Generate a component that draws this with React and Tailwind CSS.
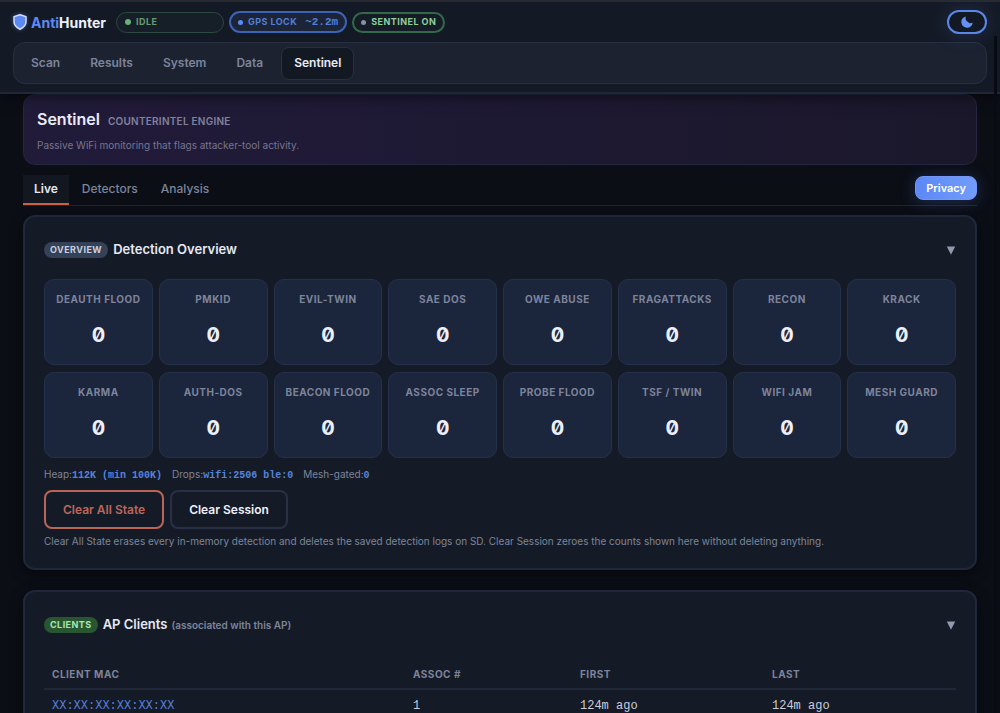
const tabs = ['Scan', 'Results', 'System', 'Data', 'Sentinel']
const subTabs = ['Live', 'Detectors', 'Analysis']

const detectors = [
  'Deauth Flood', 'PMKID', 'Evil-Twin', 'SAE DoS', 'OWE Abuse', 'FragAttacks', 'Recon', 'KRACK',
  'Karma', 'Auth-DoS', 'Beacon Flood', 'Assoc Sleep', 'Probe Flood', 'TSF / Twin', 'WiFi Jam', 'Mesh Guard'
]

const clients = [
  { mac: 'XX:XX:XX:XX:XX:XX', assoc: 1, first: '124m ago', last: '124m ago' }
]

function Card({ badge, badgeClass, title, note, children }) {
  return (
    <section className="rounded-xl border-2 border-[#20273a] bg-[#151b26] px-[19px] pt-[23px] pb-[19px] shadow-[0_4px_14px_rgba(0,0,0,0.45)]">
      <div className="flex items-center justify-between h-5">
        <h3 className="flex items-center gap-[5px] text-[13px] font-semibold text-[#e6e9f5]">
          <span className={`rounded-full px-[6px] text-[9px] leading-4 font-bold tracking-wider uppercase ${badgeClass}`}>
            {badge}
          </span>
          <span>
            {title}
            {note && <span className="ml-1 text-[10px] text-[#7d849b]">{note}</span>}
          </span>
        </h3>
        <button type="button" aria-label={`Collapse ${title}`} className="text-[#9298ad]">
          <svg className="w-[10px] h-[9px]" viewBox="0 0 10 9" fill="currentColor">
            <path d="M.8.4h8.4L5 8.8z" />
          </svg>
        </button>
      </div>
      {children}
    </section>
  )
}

function Metric({ label, value }) {
  return (
    <span>
      {label}:<span className="font-['Liberation_Mono',monospace] font-bold text-[#5583dc]">{value}</span>
    </span>
  )
}

export default function App() {
  return (
    <div className="relative h-screen flex flex-col overflow-hidden bg-[#0b0e15] font-['Inter',sans-serif] text-[#7d849b]">
      {/* Header */}
      <header className="relative z-10 border-t-2 border-b-2 border-t-[#272b31] border-b-[#20273a] bg-[#141a25] px-[13px] pt-2 pb-2 shadow-[0_3px_12px_rgba(0,0,0,0.5)]">
        <div className="flex items-center justify-between h-6">
          <div className="flex items-center gap-[5px]">
            <a href="#home" className="mr-[5px] flex items-center gap-1 text-[14px] font-bold text-[#f0f2fb]">
              <svg className="w-[14px] h-4 drop-shadow-[0_0_2px_rgba(91,138,245,0.5)]" viewBox="0 0 14 16">
                <path d="M7 .8 13 2.6v5.2c0 3.6-2.5 5.8-6 7.4-3.5-1.6-6-3.8-6-7.4V2.6z" fill="#5b8af5" stroke="#d5ddf5" strokeWidth="1.5" strokeLinejoin="round" />
              </svg>
              <span><span className="text-[#5b8af5]">Anti</span>Hunter</span>
            </a>
            <span className="flex items-center gap-[5px] w-[108px] h-[21px] rounded-full border border-[#2b4a40] bg-[#161e27] px-2 text-[9px] font-bold tracking-wider text-[#689b73]">
              <i className="w-[6px] h-[6px] rounded-full bg-[#68b078]" />
              IDLE
            </span>
            <span className="flex items-center gap-[5px] h-[22px] rounded-full border-2 border-[#3c63b5] bg-[#1c2438] px-[7px] text-[9px] font-bold tracking-wider text-[#527fd6]">
              <i className="w-[5px] h-[5px] rounded-full bg-[#5b8af5]" />
              GPS LOCK
              <span className="ml-[3px] font-['Liberation_Mono',monospace] text-[11px] font-bold tracking-normal">~2.2m</span>
            </span>
            <span className="flex items-center gap-[5px] h-[21px] rounded-full border-2 border-[#34684a] bg-[#141c25] px-[7px] text-[9px] font-bold tracking-wider text-[#90ce9d]">
              <i className="w-[5px] h-[5px] rounded-full bg-[#8a8fa5]" />
              SENTINEL ON
            </span>
          </div>
          <button type="button" aria-label="Toggle dark mode" className="flex items-center justify-center w-10 h-6 rounded-full border-2 border-[#5b88e8] bg-[#121824] shadow-[0_0_20px_rgba(80,120,230,0.22)]">
            <svg className="w-3 h-3" viewBox="0 0 12 12">
              <path d="M5 .4A5.7 5.7 0 1 0 11.7 6.4 3.6 3.6 0 0 1 7 5.9 3.9 3.9 0 0 1 5 .4z" fill="#6590f5" />
            </svg>
          </button>
        </div>
        <nav className="mt-2 flex items-center h-[42px] rounded-xl border border-[#282f40] bg-[#1c2230] px-[3px] text-xs font-semibold">
          {tabs.map(tab => (
            <a
              key={tab}
              href={`#${tab.toLowerCase()}`}
              className={tab === 'Sentinel'
                ? 'ml-[2px] flex items-center h-[33px] rounded-lg border border-[#282f40] bg-[#131923] px-3 text-[#e8ebf6]'
                : 'flex items-center h-8 px-[14px] mr-[2px]'}
            >
              {tab}
            </a>
          ))}
        </nav>
      </header>

      <main className="flex-1 min-h-0 overflow-y-auto px-[23px] [scrollbar-width:none]">
        <section className="rounded-xl border border-[#25263f] bg-linear-to-r from-[#211b3a] to-[#1b172b] px-[13px] pt-[13px] pb-[10px]">
          <h1 className="flex items-baseline gap-2">
            <span className="text-base leading-[22px] font-semibold text-[#ebecf8]">Sentinel</span>
            <span className="text-[10px] font-semibold tracking-wide text-[#82829f]">COUNTERINTEL ENGINE</span>
          </h1>
          <p className="mt-[6px] text-[10px] leading-[18px] text-[#77758f]">Passive WiFi monitoring that flags attacker-tool activity.</p>
        </section>

        <div className="mt-[10px] flex items-end justify-between border-b border-[#20263a]">
          <div className="flex items-start text-xs font-medium">
            {subTabs.map(tab => (
              <button
                key={tab}
                type="button"
                className={tab === 'Live'
                  ? 'h-[30px] border-b-2 border-[#ca6042] bg-[#13171f] px-[11px] font-semibold text-[#e6e9f5]'
                  : 'h-7 pl-[13px] pr-[10px]'}
              >
                {tab}
              </button>
            ))}
          </div>
          <button type="button" className="mb-[5px] h-6 rounded-lg border border-[#7097f5] bg-linear-to-r from-[#5d88f5] to-[#729cfa] px-[10px] text-[11px] font-semibold text-white shadow-[0_2px_16px_rgba(80,120,230,0.3)]">
            Privacy
          </button>
        </div>

        <div className="mt-[9px] space-y-5">
          <Card badge="Overview" badgeClass="bg-[#354156] text-[#c8d0df]" title="Detection Overview">
            <div className="mt-[19px] grid grid-cols-8 gap-x-[6px] gap-y-[7px]">
              {detectors.map(name => (
                <div key={name} className="flex flex-col items-center h-[86px] rounded-[10px] border border-[#25304a] bg-[#1b253b] pt-[11px]">
                  <span className="text-[10px] leading-4 font-bold tracking-wider whitespace-nowrap uppercase">{name}</span>
                  <span className="mt-[14px] text-xl leading-7 font-bold text-[#edf0fc] slashed-zero">0</span>
                </div>
              ))}
            </div>
            <div className="mt-2 flex gap-[10px] text-[10px] leading-4">
              <Metric label="Heap" value="112K (min 100K)" />
              <Metric label="Drops" value="wifi:2506 ble:0" />
              <Metric label="Mesh-gated" value="0" />
            </div>
            <div className="mt-[6px] flex gap-[6px] text-xs font-semibold">
              <button type="button" className="h-[39px] rounded-lg border-2 border-[#b86558] px-[17px] text-[#bd6659]">Clear All State</button>
              <button type="button" className="h-[39px] rounded-lg border-2 border-[#292f45] px-[17px] text-[#edf0fc]">Clear Session</button>
            </div>
            <p className="mt-1 text-[10px] leading-4">
              Clear All State erases every in-memory detection and deletes the saved detection logs on SD. Clear Session zeroes the counts shown here without deleting anything.
            </p>
          </Card>

          <Card badge="Clients" badgeClass="bg-[#285631] text-[#a9e6b1]" title="AP Clients" note="(associated with this AP)">
            <table className="mt-[26px] w-full table-fixed text-left">
              <thead className="border-b-2 border-[#202739] text-[10px] tracking-wider">
                <tr>
                  <th className="w-[361px] px-2 h-7 font-bold">CLIENT MAC</th>
                  <th className="w-[167px] px-2 font-bold">ASSOC #</th>
                  <th className="w-[192px] px-2 font-bold">FIRST</th>
                  <th className="px-2 font-bold">LAST</th>
                </tr>
              </thead>
              <tbody className="font-['Liberation_Mono',monospace] text-xs text-[#c9cddb]">
                {clients.map(client => (
                  <tr key={client.mac}>
                    <td className="px-2 h-8 text-[#557fdc]">{client.mac}</td>
                    <td className="px-2">{client.assoc}</td>
                    <td className="px-2">{client.first}</td>
                    <td className="px-2">{client.last}</td>
                  </tr>
                ))}
              </tbody>
            </table>
          </Card>
        </div>
      </main>

      {/* Scroll track */}
      <div className="absolute z-20 top-9 right-[3px] bottom-0 w-[3px] bg-[#080b11]" />
    </div>
  )
}
